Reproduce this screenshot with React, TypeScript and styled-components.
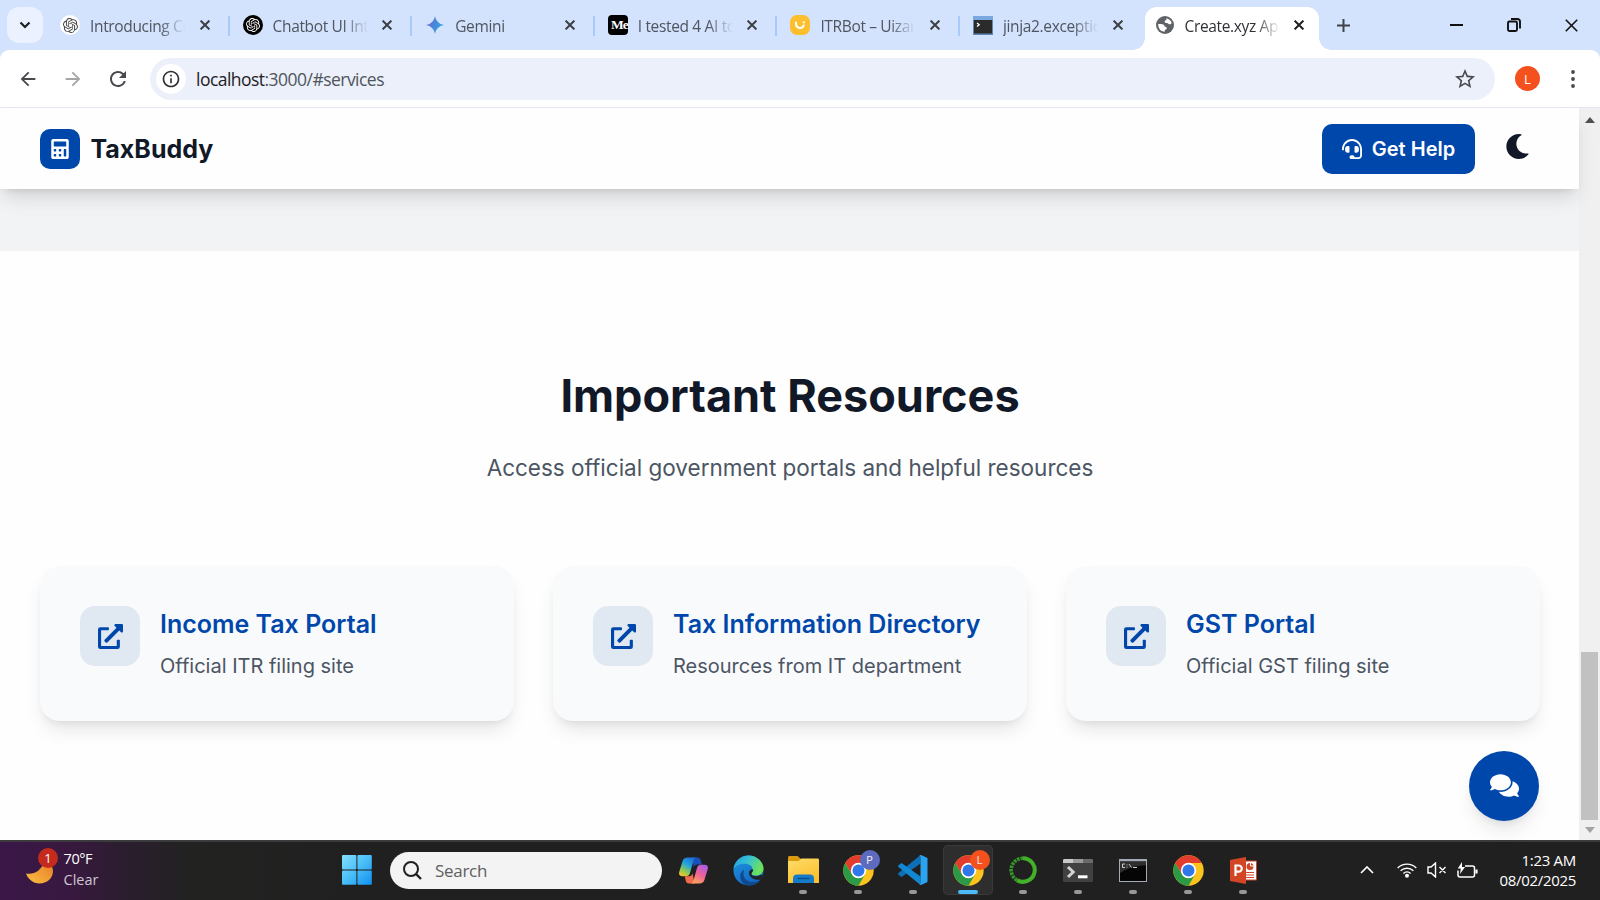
import React from 'react';
import styled, { createGlobalStyle } from 'styled-components';
import { FaHeadset, FaMoon, FaComments, FaExternalLinkAlt, FaCalculator } from 'react-icons/fa';
import { SiOpenai } from 'react-icons/si';
import { MdArrowBack, MdArrowForward, MdRefresh, MdStarBorder, MdOutlineInfo } from 'react-icons/md';

const ui = `"Open Sans", "Noto Sans", sans-serif`;

const Global = createGlobalStyle`
  * { box-sizing: border-box; }
  html, body { margin: 0; overflow: hidden; }
  button { border: 0; padding: 0; background: none; font: inherit; color: inherit; }
  h1, h2, p { margin: 0; }
  svg { display: block; flex: none; }
`;

const Screen = styled.div`
  width: 1600px;
  height: 900px;
  display: flex;
  flex-direction: column;
  overflow: hidden;
  font-family: ${ui};
  background: #fff;
`;

/* Browser window */
const TabStrip = styled.div`
  height: 50px;
  flex: none;
  display: flex;
  background: #d3e2fd;
  padding-left: 7px;
`;
const TabSearch = styled.button`
  width: 36px;
  height: 36px;
  margin-top: 7px;
  border-radius: 12px;
  background: #ebf1fe;
  display: grid;
  place-items: center;
`;
const TabItem = styled.div<{ $active?: boolean; $last?: boolean }>`
  position: relative;
  width: ${p => (p.$active ? 174 : 182.6)}px;
  height: 43px;
  margin-top: 7px;
  padding: 0 ${p => (p.$active ? 15 : 22)}px 7px ${p => (p.$active ? 10 : 11)}px;
  display: flex;
  align-items: center;
  background: ${p => (p.$active ? '#fff' : 'transparent')};
  border-radius: 12px 12px 0 0;
  color: ${p => (p.$active ? '#303236' : '#50555f')};
  ${p => !p.$active && !p.$last && `
    &::after { content: ''; position: absolute; right: 2px; top: 9px; width: 2px; height: 20px; background: #a9c9fa; }
  `}
  ${p => p.$last && `
    &::after { content: none; }
  `}
  ${p => p.$active && `
    &::before, &::after { content: ''; position: absolute; bottom: 0; width: 12px; height: 12px; }
    &::before { left: -12px; background: radial-gradient(circle at 0 0, transparent 11.5px, #fff 12px); }
    &::after { right: -12px; background: radial-gradient(circle at 100% 0, transparent 11.5px, #fff 12px); }
  `}
`;
const Tabs = styled.div`
  display: flex;
  margin-left: 6px;
`;
const TabTitle = styled.span`
  flex: 1;
  margin: 1px 0 0 10px;
  font-size: 15.5px;
  letter-spacing: -0.35px;
  line-height: 22px;
  white-space: nowrap;
  mask-image: linear-gradient(90deg, #000 70px, transparent 95px);
`;
const Favicon = styled.span<{ $bg?: string; $radius?: number; $color?: string }>`
  width: 20px;
  height: 20px;
  flex: none;
  display: grid;
  place-items: center;
  overflow: hidden;
  border-radius: ${p => p.$radius ?? 10}px;
  background: ${p => p.$bg ?? 'transparent'};
  color: ${p => p.$color ?? '#444'};
`;
const Medium = styled.span`
  font: bold 13.5px/20px "Liberation Serif", serif;
  letter-spacing: -1px;
  padding-left: 3px;
  white-space: nowrap;
`;
const NewTab = styled.button`
  width: 50px;
  display: grid;
  place-items: center;
`;
const WindowButtons = styled.div`
  margin-left: auto;
  display: flex;
`;
const WindowButton = styled.button`
  width: 57.5px;
  display: grid;
  place-items: center;
`;
const ToolbarShell = styled.div`
  background: #d3e2fd;
  flex: none;
`;
const Toolbar = styled.div`
  height: 58px;
  background: #fff;
  border-bottom: 1px solid #e4e8f1;
  border-radius: 9px 9px 0 0;
  display: flex;
  align-items: center;
  padding-left: 5px;
  color: #47494d;
`;
const ToolButton = styled.button<{ $dim?: boolean }>`
  width: 45px;
  display: grid;
  place-items: center;
  color: ${p => (p.$dim ? '#a4a5a7' : 'inherit')};
`;
const Address = styled.div`
  width: 1345px;
  height: 42px;
  margin-left: 10px;
  border-radius: 21px;
  background: #ebf0fa;
  display: flex;
  align-items: center;
  padding: 0 18px 0 6px;
`;
const InfoBadge = styled.span`
  width: 30px;
  height: 30px;
  border-radius: 50%;
  background: #fff;
  display: grid;
  place-items: center;
  color: #303134;
`;
const Url = styled.span`
  flex: 1;
  margin-left: 10px;
  font-size: 17.5px;
  letter-spacing: -0.53px;
  color: #50555b;
  b { font-weight: 400; color: #1f2023; }
`;
const Avatar = styled.span`
  width: 25px;
  height: 25px;
  margin-left: 20px;
  border-radius: 50%;
  background: #f4511e;
  color: #fff;
  font-size: 13px;
  display: grid;
  place-items: center;
`;
const MenuButton = styled.button`
  margin-left: 31px;
`;

/* Page */
const Viewport = styled.div`
  flex: 1;
  min-height: 0;
  display: flex;
`;
const Page = styled.main`
  position: relative;
  flex: 1;
  display: flex;
  flex-direction: column;
  font-family: Inter, sans-serif;
`;
const Header = styled.header`
  position: relative;
  z-index: 1;
  height: 81px;
  flex: none;
  padding: 0 39px 0 40px;
  display: flex;
  align-items: center;
  background: #fefefe;
  box-shadow: 0 12px 19px -4px rgba(0, 0, 0, 0.13), 0 5px 8px -5px rgba(0, 0, 0, 0.13);
`;
const LogoTile = styled.span`
  width: 40px;
  height: 40px;
  border-radius: 10px;
  background: #0047ab;
  color: #fff;
  display: grid;
  place-items: center;
`;
const Brand = styled.span`
  margin: 1px 0 0 10.5px;
  font-size: 25px;
  font-weight: 700;
  color: #111827;
`;
const HelpButton = styled.button`
  width: 153px;
  height: 50px;
  margin-left: auto;
  border-radius: 10px;
  background: #0047ab;
  color: #fff;
  font-size: 20px;
  font-weight: 600;
  display: flex;
  align-items: center;
  justify-content: center;
  gap: 10px;
`;
const ThemeButton = styled.button`
  margin: -5px 10px 0 30px;
  color: #111827;
`;
const GreyBand = styled.div`
  height: 62px;
  flex: none;
  background: #f2f3f5;
`;
const Resources = styled.section`
  flex: 1;
  padding: 117px 39px 0 40px;
  background: #fefefe;
  display: flex;
  flex-direction: column;
  align-items: center;
`;
const Title = styled.h1`
  font-size: 45px;
  line-height: 56px;
  font-weight: 700;
  color: #111827;
`;
const Subtitle = styled.p`
  margin-top: 26px;
  font-size: 22.5px;
  line-height: 35px;
  color: #4b5563;
`;
const Cards = styled.div`
  width: 100%;
  margin-top: 81px;
  display: grid;
  grid-template-columns: repeat(3, 1fr);
  gap: 39px;
`;
const Card = styled.article`
  height: 155px;
  padding: 40px;
  display: flex;
  gap: 20px;
  border-radius: 20px;
  background: #f9fafc;
  box-shadow: 0 12px 19px -4px rgba(0, 0, 0, 0.1), 0 5px 8px -5px rgba(0, 0, 0, 0.1);
`;
const CardIcon = styled.span`
  width: 60px;
  height: 60px;
  flex: none;
  border-radius: 15px;
  background: #e0e8f2;
  color: #0047ab;
  display: grid;
  place-items: center;
`;
const CardTitle = styled.h2`
  padding-top: 1px;
  font-size: 25px;
  line-height: 35px;
  font-weight: 600;
  color: #0047ab;
  white-space: nowrap;
`;
const CardText = styled.p`
  margin-top: 9px;
  font-size: 20px;
  line-height: 30px;
  color: #4b5563;
`;
const ChatButton = styled.button`
  position: absolute;
  right: 40px;
  bottom: 19px;
  width: 70px;
  height: 70px;
  padding-bottom: 1px;
  border-radius: 50%;
  background: #0047ab;
  color: #fff;
  display: grid;
  place-items: center;
  box-shadow: 0 12px 19px -4px rgba(0, 0, 0, 0.1), 0 5px 8px -5px rgba(0, 0, 0, 0.1);
`;
const Scrollbar = styled.div`
  width: 21px;
  background: #f0f0f0;
  display: flex;
  flex-direction: column;
  align-items: center;
  padding: 9px 0 7px;
`;
const Thumb = styled.div`
  width: 17px;
  height: 168px;
  margin: auto 0 7px;
  background: #c1c1c1;
`;

/* Taskbar */
const Taskbar = styled.footer`
  height: 60px;
  flex: none;
  display: flex;
  align-items: center;
  border-top: 2px solid #3b3b3d;
  padding-bottom: 2px;
  color: #fff;
  background: linear-gradient(90deg, #3a1748 0, #38183f 70px, #2b1e2e 125px, #222221 190px, #202020 350px);
`;
const Weather = styled.div`
  position: relative;
  width: 342px;
  height: 58px;
  padding: 8px 0 0 26px;
  display: flex;
  gap: 10.5px;
`;
const WeatherText = styled.div`
  font-size: 14.5px;
  line-height: 20.5px;
  letter-spacing: -0.4px;
  span { display: block; color: #cfc6d3; letter-spacing: 0; }
`;
const Count = styled.span`
  position: absolute;
  left: 38px;
  top: 6.5px;
  width: 20px;
  height: 20px;
  border-radius: 50%;
  background: #c42b1c;
  font-size: 13px;
  line-height: 20px;
  text-align: center;
`;
const SearchBox = styled.div`
  width: 272px;
  height: 37px;
  margin: 0 6px 0 18px;
  padding-left: 13px;
  border-radius: 19px;
  background: #f3f3f3;
  color: #606060;
  display: flex;
  align-items: center;
  gap: 13px;
  font-size: 17px;
  letter-spacing: -0.3px;
`;
const Apps = styled.div`
  display: flex;
  gap: 5px;
`;
const TaskApp = styled.div<{ $active?: boolean; $running?: boolean }>`
  position: relative;
  width: 50px;
  height: 50px;
  display: grid;
  place-items: center;
  border-radius: 5px;
  ${p => p.$active && 'background: #2e2e2e; box-shadow: inset 0 0 0 1px #3a3a3a;'}
  ${p => p.$running && `
    &::after {
      content: ''; position: absolute; bottom: 1px; left: calc(50% - ${p.$active ? 10 : 4}px);
      width: ${p.$active ? 20 : 8}px; height: 4px; border-radius: 2px; background: ${p.$active ? '#4cb8f5' : '#989898'};
    }
  `}
`;
const Profile = styled.span<{ $color: string }>`
  position: absolute;
  right: 3.5px;
  top: 4.5px;
  width: 20px;
  height: 20px;
  border-radius: 50%;
  background: ${p => p.$color};
  color: #f4e9ee;
  font-size: 11.5px;
  line-height: 20px;
  text-align: center;
`;
const Tray = styled.div`
  margin-left: auto;
  display: flex;
  align-items: center;
  padding-right: 24px;
`;
const TrayIcon = styled.svg<{ $gap?: number }>`
  margin-left: ${p => p.$gap ?? 0}px;
`;
const Clock = styled.div`
  width: 98px;
  text-align: right;
  font-size: 15px;
  line-height: 20px;
  letter-spacing: -0.3px;
  white-space: nowrap;
`;

const Cross = ({ size = 10, w = 2, color = '#3c4043' }: { size?: number; w?: number; color?: string }) => (
  <svg width={size} height={size} viewBox="0 0 10 10" stroke={color} strokeWidth={(w * 10) / size}>
    <path d="M.6.6 9.4 9.4M9.4.6.6 9.4" />
  </svg>
);

const GlobeIcon = () => (
  <svg width="18" height="18" viewBox="0 0 18 18">
    <circle cx="9" cy="9" r="9" fill="#5f6368" />
    <path fill="#fff" d="M10.500 2.200c2.500.6 4.500 2.400 5.200 4.800-.6 1.200-1.700 1.600-2.700 1.200-.8-.4-.9-1.200-2-1.300-1.300 0-2.400-.2-2.400-1.500 0-1.200 1.300-1 1.700-1.700.2-.5 0-1 .2-1.500z" />
    <path fill="#fff" d="M2.200 8c2.200-.2 4.600-.1 5.800 1 .7.700.2 1.500 1.200 1.700 1.200.2 1.700.8 1.500 1.800-.3 1.100-1.700 1-2 2-.1.500 0 .8-.1 1.300C4.800 15.500 2 12.500 2.200 8z" />
  </svg>
);
const GeminiIcon = () => (
  <svg width="18" height="18" viewBox="0 0 18 18">
    <defs>
      <linearGradient id="gem" x1="0" y1="0" x2="1" y2="0.4">
        <stop offset="0" stopColor="#9168c0" /><stop offset=".5" stopColor="#4a83d8" /><stop offset="1" stopColor="#39a5e0" />
      </linearGradient>
    </defs>
    <path fill="url(#gem)" d="M9 0c.9 5 4 8.100 9 9-5 .9-8.100 4-9 9-.9-5-4-8.100-9-9 5-.9 8.100-4 9-9z" />
  </svg>
);
const UizardIcon = () => (
  <svg width="20" height="20" viewBox="0 0 20 20">
    <rect width="20" height="20" rx="7" fill="#fdbf2d" />
    <path d="M6 7.500v1.500a4 4 0 0 0 7.800 1.200" fill="none" stroke="#fff" strokeWidth="2" strokeLinecap="round" />
    <circle cx="13.800" cy="7.300" r="1.100" fill="#fff" />
  </svg>
);
const ConsoleIcon = () => (
  <svg width="20" height="19" viewBox="0 0 20 19">
    <rect width="20" height="19" fill="#5f87b5" />
    <rect y="0" width="20" height="4" fill="#7ba8df" />
    <rect x="1" y="4" width="18" height="13.500" fill="#2b2b2c" />
    <path d="m4 7 2.200 1.700L4 10.400" stroke="#fff" strokeWidth="1.300" fill="none" />
  </svg>
);

const WindowsLogo = () => (
  <svg width="30" height="30" viewBox="0 0 30 30">
    <defs>
      <linearGradient id="win" gradientUnits="userSpaceOnUse" x1="0" y1="0" x2="30" y2="30">
        <stop offset="0" stopColor="#86dffb" /><stop offset=".5" stopColor="#48bdf7" /><stop offset="1" stopColor="#0f8ef0" />
      </linearGradient>
    </defs>
    <g fill="url(#win)">
      <rect width="14.400" height="14.400" rx="1" /><rect x="15.400" width="14.400" height="14.400" rx="1" />
      <rect y="15.400" width="14.400" height="14.400" rx="1" /><rect x="15.400" y="15.400" width="14.400" height="14.400" rx="1" />
    </g>
  </svg>
);
const MoonWeather = () => (
  <svg width="27" height="40" viewBox="0 0 27 40">
    <defs><linearGradient id="mw" x1="1" y1="0" x2="0" y2="1"><stop offset="0" stopColor="#e87a26" /><stop offset="1" stopColor="#fbc043" /></linearGradient></defs>
    <path d="M0 24.500c8 1.500 15-2.500 18.500-12.500 5 1 8.500 5 8.500 10 0 7.500-6 12.500-13.500 12.500C7 34.500 2 30 0 24.500z" fill="url(#mw)" />
  </svg>
);
const Copilot = () => (
  <svg width="29" height="27" viewBox="0 0 29 27">
    <defs>
      <linearGradient id="cpa" x1="0.700" y1="0" x2="0.200" y2="1">
        <stop offset="0" stopColor="#1e6fd9" /><stop offset=".4" stopColor="#23a5dd" /><stop offset=".7" stopColor="#83c95a" /><stop offset="1" stopColor="#f5c62b" />
      </linearGradient>
      <linearGradient id="cpb" x1="0.800" y1="0" x2="0.300" y2="1">
        <stop offset="0" stopColor="#a55ee6" /><stop offset=".5" stopColor="#ee5f9b" /><stop offset="1" stopColor="#fba45c" />
      </linearGradient>
    </defs>
    <path fill="#1b50b8" d="M13 .5h5.500c2 0 2.800 1 3.300 3l1 4h-4.500c-2 0-3 1-3.600 3z" />
    <path fill="url(#cpa)" d="M8.500.5h8.500c-1.500.5-2.200 2-2.700 3.800L11 16c-.7 2.200-1.800 3.200-4 3.200H3.500c-2.800 0-4-1.700-3.200-4.500L3.600 4C4.300 1.700 5.800.5 8.500.5z" />
    <path fill="#f26b4f" d="M15.500 26.500H10c-2 0-2.800-1-3.300-3l-1-4.300H10c2 0 3-1 3.600-3z" />
    <path fill="url(#cpb)" d="M20.500 26.500H12c1.500-.5 2.200-2 2.700-3.800L18 11c.7-2.200 1.800-3.300 4-3.300h3.500c2.800 0 4 1.800 3.200 4.600L25.400 23c-.7 2.300-2.200 3.500-4.900 3.500z" />
  </svg>
);
const Edge = () => (
  <svg width="31" height="31" viewBox="0 0 31 31">
    <defs>
      <linearGradient id="ea" x1="0" y1="0" x2="1" y2=".4"><stop offset="0" stopColor="#249fe0" /><stop offset=".5" stopColor="#35c1d3" /><stop offset="1" stopColor="#6ce25a" /></linearGradient>
      <linearGradient id="eb" x1="0" y1="0" x2=".6" y2="1"><stop offset="0" stopColor="#1f98e0" /><stop offset="1" stopColor="#1266c4" /></linearGradient>
    </defs>
    <circle cx="15.500" cy="15.500" r="15" fill="url(#eb)" />
    <path d="M11 15c-2 6 1 12 9 12 3 0 5.500-.7 7.500-2.500C25 28.500 21 30.500 16 30.500 9 30 6.500 24 7.500 19c.6-2 1.800-3.400 3.500-4z" fill="#114a8c" />
    <path d="M.5 14C1.500 6 8 .5 15.500.5 24 .5 30.500 7 30.500 13.500c0 4.700-3.500 7-7.500 7-3 0-5-1-5-2 0-.7 1.500-1.500 1.500-4 0-3.500-3.500-5.700-7.500-5.700C6.500 8.800 2.500 10.500.5 14z" fill="url(#ea)" />
    <path d="M18 18.500c.5 2.500 5 3.800 9.500 1.500l3.500 0c-.5 2.500-1.500 3.500-3 4.500-6 1.500-12-2-12-6.500 0-2 1.200-3 2.300-3.500 1.700-.5 2.200.5 1.700 1.500-.6.900-1.200 1.500-1 2.500z" fill="#202428" />
  </svg>
);
const Folder = () => (
  <svg width="31" height="28" viewBox="0 0 31 28">
    <defs><linearGradient id="fo" x1="0" y1="0" x2=".5" y2="1"><stop offset="0" stopColor="#ffdc6b" /><stop offset="1" stopColor="#fbc02f" /></linearGradient></defs>
    <path d="M0 1.500C0 .6.600 0 1.500 0h8L13 3v6H0z" fill="#d99a12" />
    <path d="M0 5h10.500l3-2.500H29.500c1 0 1.500.6 1.500 1.500v23H0z" fill="url(#fo)" />
    <path d="M5 27v-4.500C5 20 6.500 18.500 9 18.500h13c2.500 0 4 1.500 4 4V27z" fill="#147bc9" />
    <path d="M9.500 22.500h12" stroke="#0a4a85" strokeWidth="1.300" />
  </svg>
);
const Chrome = () => (
  <svg width="31" height="31" viewBox="-15.500 -15.500 31 31">
    <circle r="15.200" fill="#fbc31c" />
    <path d="M-13.160-7.600A15.200 15.200 0 0 0 0 15.200L6.580 3.800A7.600 7.600 0 0 1-6.580 3.800z" fill="#2b9a46" />
    <path d="M-13.160-7.600A15.200 15.200 0 0 1 13.160-7.600H0L-6.580 3.800z" fill="#e23c2e" />
    <circle r="7.700" fill="#fff" /><circle r="6" fill="#3078ea" />
  </svg>
);
const VsCode = () => (
  <svg width="30" height="30" viewBox="0 0 30 30">
    <path d="M22.500 0v8.500L3.500 22 .5 19.800c-.6-.6-.6-1.300 0-1.900z" fill="#0d6fb8" />
    <path d="M22.500 30v-8.500L3.500 8 .5 10.200c-.6.600-.6 1.300 0 1.900z" fill="#1287d2" />
    <path d="M21.500.4 23 0l6.500 3v24L23 30l-1.500-.4 1-1.600V2z" fill="#2ba3ef" />
  </svg>
);
const Anaconda = () => (
  <svg width="28" height="28" viewBox="0 0 28 28" fill="none">
    <path d="M14 2.200a11.800 11.800 0 1 1-6 22" stroke="#43b02a" strokeWidth="4" />
    <path d="M14 2.200a11.800 11.800 0 0 0-6 22" stroke="#36962a" strokeWidth="3.600" strokeDasharray="2.600 .9" />
  </svg>
);
const Terminal = () => (
  <svg width="30" height="23" viewBox="0 0 30 23">
    <rect width="30" height="23" rx="1.500" fill="#414141" />
    <path d="M0 4V1.500C0 .5.500 0 1.500 0H10v4z" fill="#c9c9c9" /><path d="M10 0h10v4H10z" fill="#9a9a9a" /><path d="M20 0h8.500c1 0 1.500.5 1.500 1.500V4H20z" fill="#6a6a6a" />
    <path d="m5 8 5.200 5L5 18" fill="none" stroke="#d4d4d4" strokeWidth="3" /><path d="M15 17.800h9.500" stroke="#fff" strokeWidth="3" />
  </svg>
);
const Cmd = () => (
  <svg width="28" height="23" viewBox="0 0 28 23">
    <rect width="28" height="23" fill="#a5abb5" /><rect x="1" y="2.500" width="26" height="19.500" fill="#050505" />
    <path d="M1 2.500h26v4C17 6.500 9 9 1 14z" fill="#2e2e2e" />
    <path d="M6 5H3.500v3.500H6M8 5.500v.8M8 7.700v.8M10 5l2.500 3.500M14 8.500h4" stroke="#ddd" strokeWidth=".9" fill="none" />
  </svg>
);
const Ppt = () => (
  <svg width="27" height="27" viewBox="0 0 27 27">
    <path d="M14 4h12.500v19H14z" fill="#fff" stroke="#d24625" />
    <circle cx="20" cy="9.500" r="3.500" fill="#d24625" /><path d="M20.500 5.500v3.500h3.500" stroke="#fff" fill="none" strokeWidth="1" />
    <path d="M16 15.500h8M16 18h8M16 20.500h8" stroke="#d24625" strokeWidth="1.200" />
    <path d="M0 3 16 0v27L0 24z" fill="#d24625" />
    <path d="M5.500 19V8.500h3.200a3 3 0 0 1 0 6.200H5.500" stroke="#fff" strokeWidth="2.200" fill="none" />
  </svg>
);

const tabs = [
  { title: 'Introducing Cl', icon: <Favicon $bg="#fff"><SiOpenai size={15} /></Favicon> },
  { title: 'Chatbot UI Int', icon: <Favicon $bg="#000" $color="#fff"><SiOpenai size={14} /></Favicon> },
  { title: 'Gemini', icon: <Favicon $radius={0}><GeminiIcon /></Favicon> },
  { title: 'I tested 4 AI to', icon: <Favicon $bg="#000" $radius={4} $color="#fff"><Medium>Me</Medium></Favicon> },
  { title: 'ITRBot – Uizar', icon: <Favicon $radius={0}><UizardIcon /></Favicon> },
  { title: 'jinja2.exceptio', icon: <Favicon $radius={0}><ConsoleIcon /></Favicon> },
];
const cards = [
  ['Income Tax Portal', 'Official ITR filing site'],
  ['Tax Information Directory', 'Resources from IT department'],
  ['GST Portal', 'Official GST filing site'],
];

export default function App() {
  return (
    <Screen>
      <Global />
      <TabStrip>
        <TabSearch>
          <svg width="12" height="8" viewBox="0 0 12 8" fill="none" stroke="#1f2023" strokeWidth="2.200"><path d="m1.500 1.500 4.500 4.500 4.500-4.500" /></svg>
        </TabSearch>
        <Tabs>
          {tabs.map((t, i) => (
            <TabItem key={t.title} $last={i === tabs.length - 1}>
              {t.icon}
              <TabTitle>{t.title}</TabTitle>
              <Cross />
            </TabItem>
          ))}
          <TabItem $active>
            <Favicon $radius={0}><GlobeIcon /></Favicon>
            <TabTitle>Create.xyz App</TabTitle>
            <Cross color="#202124" />
          </TabItem>
        </Tabs>
        <NewTab>
          <svg width="13" height="13" viewBox="0 0 13 13" stroke="#3f4247" strokeWidth="2"><path d="M6.500 0v13M0 6.500h13" /></svg>
        </NewTab>
        <WindowButtons>
          <WindowButton><svg width="13" height="2"><rect width="13" height="2" fill="#111" /></svg></WindowButton>
          <WindowButton>
            <svg width="14" height="14" viewBox="0 0 14 14" fill="none" stroke="#111" strokeWidth="1.900"><rect x="1" y="3.500" width="9" height="9.500" rx="1.500" /><path d="M4 1h6.500A2.500 2.500 0 0 1 13 3.500v7" /></svg>
          </WindowButton>
          <WindowButton><Cross size={13} w={1.6} color="#111" /></WindowButton>
        </WindowButtons>
      </TabStrip>
      <ToolbarShell>
        <Toolbar>
          <ToolButton><MdArrowBack size={22} /></ToolButton>
          <ToolButton $dim><MdArrowForward size={22} /></ToolButton>
          <ToolButton><MdRefresh size={24} /></ToolButton>
          <Address>
            <InfoBadge><MdOutlineInfo size={20} /></InfoBadge>
            <Url><b>localhost</b>:3000/#services</Url>
            <MdStarBorder size={24} />
          </Address>
          <Avatar>L</Avatar>
          <MenuButton>
            <svg width="4" height="18" viewBox="0 0 4 18" fill="#47494d"><circle cx="2" cy="2" r="1.900" /><circle cx="2" cy="9" r="1.900" /><circle cx="2" cy="16" r="1.900" /></svg>
          </MenuButton>
        </Toolbar>
      </ToolbarShell>
      <Viewport>
        <Page>
          <Header>
            <LogoTile><FaCalculator size={20} /></LogoTile>
            <Brand>TaxBuddy</Brand>
            <HelpButton><FaHeadset size={20} />Get Help</HelpButton>
            <ThemeButton><FaMoon size={25} /></ThemeButton>
          </Header>
          <GreyBand />
          <Resources>
            <Title>Important Resources</Title>
            <Subtitle>Access official government portals and helpful resources</Subtitle>
            <Cards>
              {cards.map(([title, text]) => (
                <Card key={title}>
                  <CardIcon><FaExternalLinkAlt size={25} /></CardIcon>
                  <div>
                    <CardTitle>{title}</CardTitle>
                    <CardText>{text}</CardText>
                  </div>
                </Card>
              ))}
            </Cards>
          </Resources>
          <ChatButton><FaComments size={29} /></ChatButton>
        </Page>
        <Scrollbar>
          <svg width="10" height="6"><path d="M0 6 5 0l5 6z" fill="#505050" /></svg>
          <Thumb />
          <svg width="10" height="6"><path d="M0 0h10L5 6z" fill="#a3a3a3" /></svg>
        </Scrollbar>
      </Viewport>
      <Taskbar>
        <Weather>
          <MoonWeather />
          <Count>1</Count>
          <WeatherText>70°F<span>Clear</span></WeatherText>
        </Weather>
        <WindowsLogo />
        <SearchBox>
          <svg width="19" height="19" viewBox="0 0 19 19" fill="none" stroke="#202020" strokeWidth="2"><circle cx="8" cy="8" r="7" /><path d="m13 13 5 5" strokeWidth="2.400" /></svg>
          Search
        </SearchBox>
        <Apps>
          <TaskApp><Copilot /></TaskApp>
          <TaskApp><Edge /></TaskApp>
          <TaskApp $running><Folder /></TaskApp>
          <TaskApp $running><Chrome /><Profile $color="#5c6bc0">P</Profile></TaskApp>
          <TaskApp $running><VsCode /></TaskApp>
          <TaskApp $running $active><Chrome /><Profile $color="#f4511e">L</Profile></TaskApp>
          <TaskApp $running><Anaconda /></TaskApp>
          <TaskApp $running><Terminal /></TaskApp>
          <TaskApp $running><Cmd /></TaskApp>
          <TaskApp $running><Chrome /></TaskApp>
          <TaskApp $running><Ppt /></TaskApp>
        </Apps>
        <Tray>
          <TrayIcon width="14" height="8" viewBox="0 0 14 8" fill="none" stroke="#fff" strokeWidth="1.700"><path d="m1 7 6-6 6 6" /></TrayIcon>
          <TrayIcon $gap={23} width="20" height="16" viewBox="0 0 20 16" fill="none" stroke="#fff" strokeWidth="1.400">
            <path d="M.7 6a13.200 13.200 0 0 1 18.600 0M3.600 8.800a9.200 9.200 0 0 1 12.800 0M6.400 11.500a5.200 5.200 0 0 1 7.200 0" /><circle cx="10" cy="13.700" r="1.300" fill="#fff" />
          </TrayIcon>
          <TrayIcon $gap={10} width="20" height="16" viewBox="0 0 20 16" fill="none" stroke="#fff" strokeWidth="1.400">
            <path d="M1 5h3l4.500-4v14L4 11H1zM12.500 5l6 6M18.500 5l-6 6" />
          </TrayIcon>
          <TrayIcon $gap={10} width="21" height="17" viewBox="0 0 21 17" fill="none" stroke="#fff" strokeWidth="1.500">
            <path d="M8 4h7.500A2 2 0 0 1 17.500 6v7a2 2 0 0 1-2 2H3a2 2 0 0 1-2-2V8.500" /><path d="M19.500 7.500v4" strokeWidth="2.200" /><path d="M5 0 .8 6.500h3L3 12l5-7H5z" fill="#fff" stroke="none" />
          </TrayIcon>
          <Clock>1:23 AM<br />08/02/2025</Clock>
        </Tray>
      </Taskbar>
    </Screen>
  );
}
